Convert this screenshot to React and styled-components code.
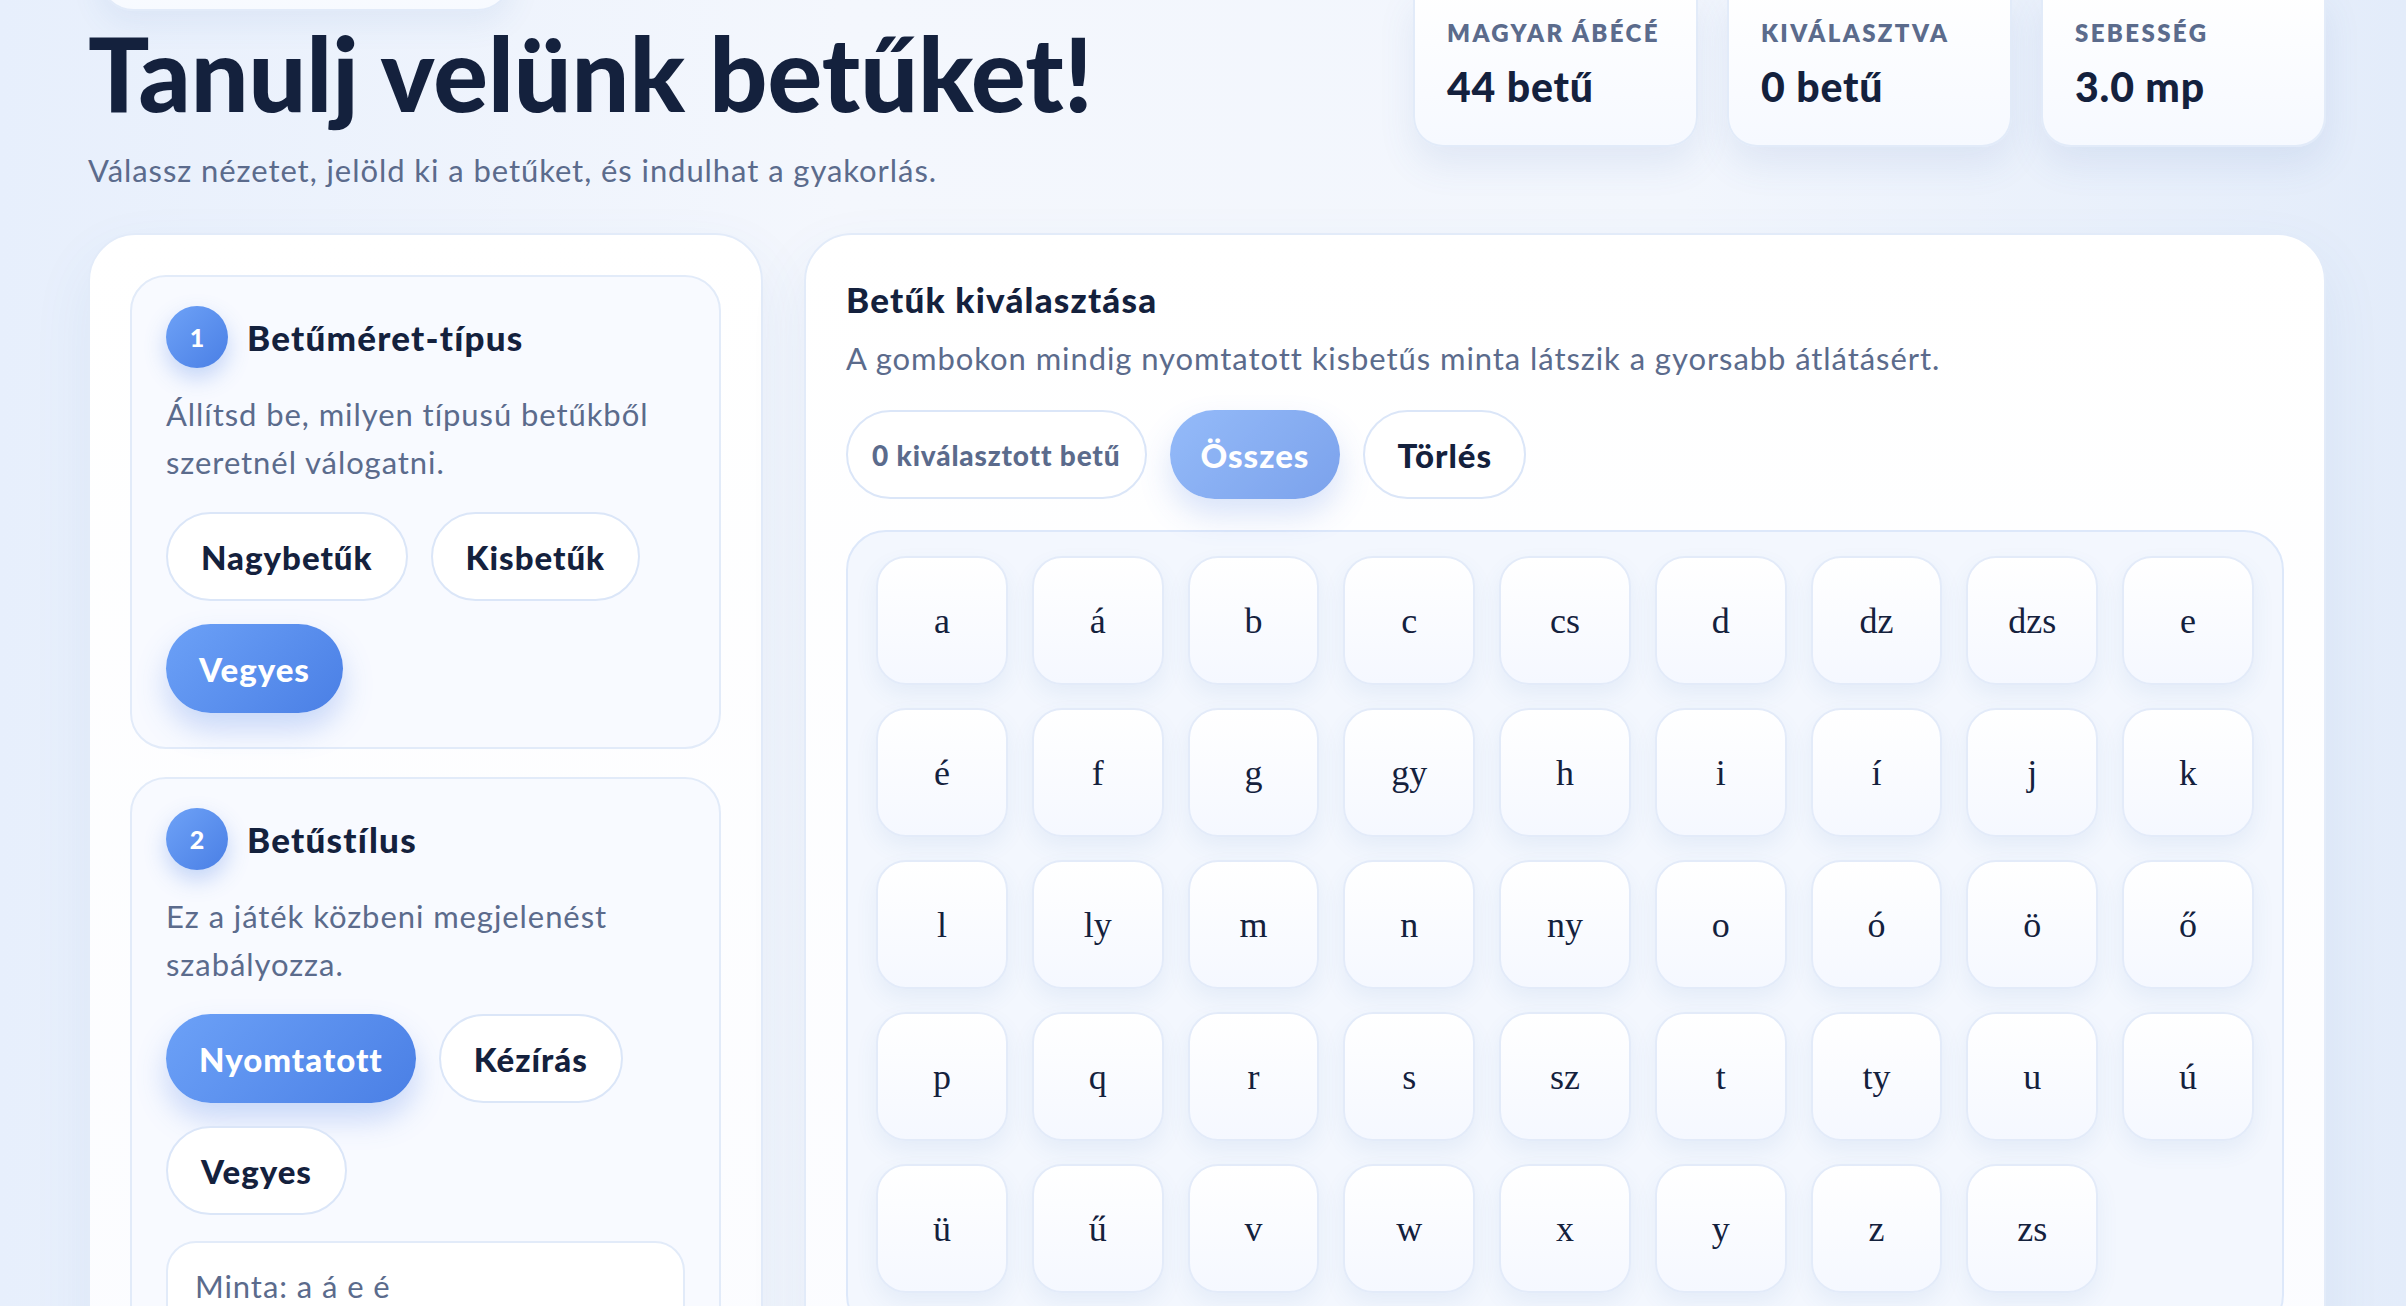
import React from 'react';
import styled, { createGlobalStyle, css } from 'styled-components';

const GlobalStyle = createGlobalStyle`
  html, body {
    margin: 0;
    padding: 0;
    overflow: hidden;
  }
  body {
    font-family: Lato, "Noto Sans", sans-serif;
    color: #14213d;
    background: linear-gradient(90deg, #e7effc 0%, #f4f7fd 35%, #f2f6fd 70%, #e3ecfa 100%);
    min-height: 100vh;
  }
`;

const ink = '#14213d';
const muted = '#5b6b8c';
const line = '#e2ebf9';

const Page = styled.div`
  width: 2238px;
  padding-left: 88px;
`;

const Header = styled.header`
  display: flex;
  justify-content: space-between;
  align-items: flex-start;
  margin-top: -63px;
`;

const Intro = styled.div`
  display: flex;
  flex-direction: column;
`;

const TopPill = styled.div`
  width: 415px;
  height: 74px;
  margin-left: 10px;
  border-radius: 0 0 36px 36px;
  background: linear-gradient(180deg, #ffffff, #f7faff);
  border: 2px solid ${line};
  box-shadow: 0 14px 30px rgba(70, 110, 180, 0.08);
  box-sizing: border-box;
`;

const Title = styled.h1`
  margin: 7px 0 0;
  font-size: 102px;
  line-height: 1.08;
  font-weight: 900;
  letter-spacing: 0;
  color: ${ink};
`;

const Lead = styled.p`
  margin: 20px 0 0;
  font-size: 31px;
  line-height: 1.45;
  letter-spacing: 0.03em;
  color: ${muted};
`;

const Stats = styled.div`
  display: flex;
  gap: 29px;
  margin-top: 53px;
`;

const StatCard = styled.div`
  width: 285px;
  box-sizing: border-box;
  padding: 29px 32px 34px;
  border-radius: 0 0 30px 30px;
  border: 2px solid ${line};
  border-top: none;
  background: linear-gradient(180deg, #ffffff, #f6f9ff);
  box-shadow: 0 18px 36px rgba(70, 110, 180, 0.1);
`;

const StatLabel = styled.div`
  font-size: 24px;
  line-height: 1.2;
  font-weight: 800;
  letter-spacing: 0.1em;
  text-transform: uppercase;
  white-space: nowrap;
  color: ${muted};
`;

const StatValue = styled.div`
  margin-top: 14px;
  font-size: 41px;
  line-height: 1.2;
  font-weight: 900;
  letter-spacing: 0.02em;
  white-space: nowrap;
  color: ${ink};
`;

const Main = styled.main`
  display: grid;
  grid-template-columns: 675px 1fr;
  gap: 41px;
  margin-top: 40px;
  align-items: start;
`;

const Panel = styled.section`
  box-sizing: border-box;
  border-radius: 48px;
  border: 2px solid ${line};
  background: linear-gradient(180deg, #ffffff 0%, #fbfcff 100%);
  box-shadow: 0 24px 60px rgba(70, 110, 180, 0.08);
  padding: ${(p) => p.$pad};
  min-height: 1200px;
`;

const SettingCard = styled.div`
  box-sizing: border-box;
  border-radius: 36px;
  border: 2px solid ${line};
  background: #f8faff;
  padding: 29px 34px 34px;

  & + & {
    margin-top: 28px;
  }
`;

const StepHead = styled.div`
  display: flex;
  align-items: center;
  gap: 19px;
`;

const StepNumber = styled.span`
  width: 62px;
  height: 62px;
  border-radius: 50%;
  display: flex;
  align-items: center;
  justify-content: center;
  background: linear-gradient(135deg, #6ea2f7, #4a7fe5);
  color: #fff;
  font-size: 25px;
  font-weight: 900;
  box-shadow: 0 10px 22px rgba(74, 127, 229, 0.3);
`;

const CardTitle = styled.h2`
  margin: 0;
  font-size: 35px;
  line-height: 1.2;
  font-weight: 900;
  letter-spacing: 0.035em;
  color: ${ink};
`;

const CardText = styled.p`
  margin: ${(p) => p.$margin || '22px 0 0'};
  font-size: 31px;
  line-height: 48px;
  letter-spacing: 0.03em;
  color: ${muted};
`;

const ChipRow = styled.div`
  display: flex;
  flex-wrap: wrap;
  gap: 23px;
  margin-top: ${(p) => p.$top || '26px'};
`;

const Chip = styled.button`
  box-sizing: border-box;
  height: 89px;
  padding: 0 ${(p) => p.$padX || '33px'};
  border-radius: 999px;
  font-family: inherit;
  font-size: ${(p) => p.$size || '33px'};
  font-weight: 900;
  letter-spacing: 0.03em;
  border: 2px solid #dbe6f8;
  background: #ffffff;
  color: ${(p) => (p.$muted ? muted : ink)};
  cursor: pointer;

  ${(p) =>
    p.$active &&
    css`
      border: none;
      color: #fff;
      background: linear-gradient(135deg, #6ca1f7, #4a7fe5);
      box-shadow: 0 16px 30px rgba(74, 127, 229, 0.28);
      opacity: ${p.$soft ? 0.72 : 1};
    `}
`;

const Sample = styled.div`
  margin-top: 26px;
  box-sizing: border-box;
  border-radius: 30px;
  border: 2px solid ${line};
  background: #fff;
  padding: 19px 27px;
  font-size: 31px;
  line-height: 48px;
  letter-spacing: 0.03em;
  color: ${muted};
  min-height: 120px;
`;

const ToolRow = styled.div`
  display: flex;
  gap: 23px;
  margin-top: 28px;
`;

const LetterBoard = styled.div`
  margin-top: 31px;
  box-sizing: border-box;
  border-radius: 40px;
  border: 2px solid #dde8fa;
  background: #f3f7fe;
  padding: 24px 28px 40px;
  display: grid;
  grid-template-columns: repeat(9, 1fr);
  gap: 23px 24px;
`;

const LetterTile = styled.button`
  height: 129px;
  border-radius: 30px;
  border: 2px solid #e3ebf9;
  background: linear-gradient(180deg, #ffffff, #f5f8ff);
  box-shadow: 0 10px 22px rgba(70, 110, 180, 0.08);
  font-family: "Liberation Serif", "Times New Roman", serif;
  font-size: 36px;
  color: ${ink};
  cursor: pointer;
  display: flex;
  align-items: center;
  justify-content: center;
  padding: 0;
`;

const letters = [
  'a', 'á', 'b', 'c', 'cs', 'd', 'dz', 'dzs', 'e',
  'é', 'f', 'g', 'gy', 'h', 'i', 'í', 'j', 'k',
  'l', 'ly', 'm', 'n', 'ny', 'o', 'ó', 'ö', 'ő',
  'p', 'q', 'r', 's', 'sz', 't', 'ty', 'u', 'ú',
  'ü', 'ű', 'v', 'w', 'x', 'y', 'z', 'zs',
];

const stats = [
  { label: 'Magyar ábécé', value: '44 betű' },
  { label: 'Kiválasztva', value: '0 betű' },
  { label: 'Sebesség', value: '3.0 mp' },
];

export default function App() {
  return (
    <Page>
      <GlobalStyle />
      <Header>
        <Intro>
          <TopPill />
          <Title>Tanulj velünk betűket!</Title>
          <Lead>Válassz nézetet, jelöld ki a betűket, és indulhat a gyakorlás.</Lead>
        </Intro>
        <Stats>
          {stats.map((s) => (
            <StatCard key={s.label}>
              <StatLabel>{s.label}</StatLabel>
              <StatValue>{s.value}</StatValue>
            </StatCard>
          ))}
        </Stats>
      </Header>

      <Main>
        <Panel $pad="40px">
          <SettingCard>
            <StepHead>
              <StepNumber>1</StepNumber>
              <CardTitle>Betűméret-típus</CardTitle>
            </StepHead>
            <CardText>Állítsd be, milyen típusú betűkből szeretnél válogatni.</CardText>
            <ChipRow>
              <Chip>Nagybetűk</Chip>
              <Chip>Kisbetűk</Chip>
              <Chip $active>Vegyes</Chip>
            </ChipRow>
          </SettingCard>

          <SettingCard>
            <StepHead>
              <StepNumber>2</StepNumber>
              <CardTitle>Betűstílus</CardTitle>
            </StepHead>
            <CardText>Ez a játék közbeni megjelenést szabályozza.</CardText>
            <ChipRow>
              <Chip $active>Nyomtatott</Chip>
              <Chip>Kézírás</Chip>
              <Chip>Vegyes</Chip>
            </ChipRow>
            <Sample>Minta: a á e é</Sample>
          </SettingCard>
        </Panel>

        <Panel $pad="43px 40px 40px">
          <CardTitle>Betűk kiválasztása</CardTitle>
          <CardText $margin="14px 0 0">
            A gombokon mindig nyomtatott kisbetűs minta látszik a gyorsabb átlátásért.
          </CardText>
          <ToolRow>
            <Chip $muted $size="28px" $padX="24px">0 kiválasztott betű</Chip>
            <Chip $active $soft $padX="31px">Összes</Chip>
            <Chip $padX="32px">Törlés</Chip>
          </ToolRow>
          <LetterBoard>
            {letters.map((l) => (
              <LetterTile key={l}>{l}</LetterTile>
            ))}
          </LetterBoard>
        </Panel>
      </Main>
    </Page>
  );
}
